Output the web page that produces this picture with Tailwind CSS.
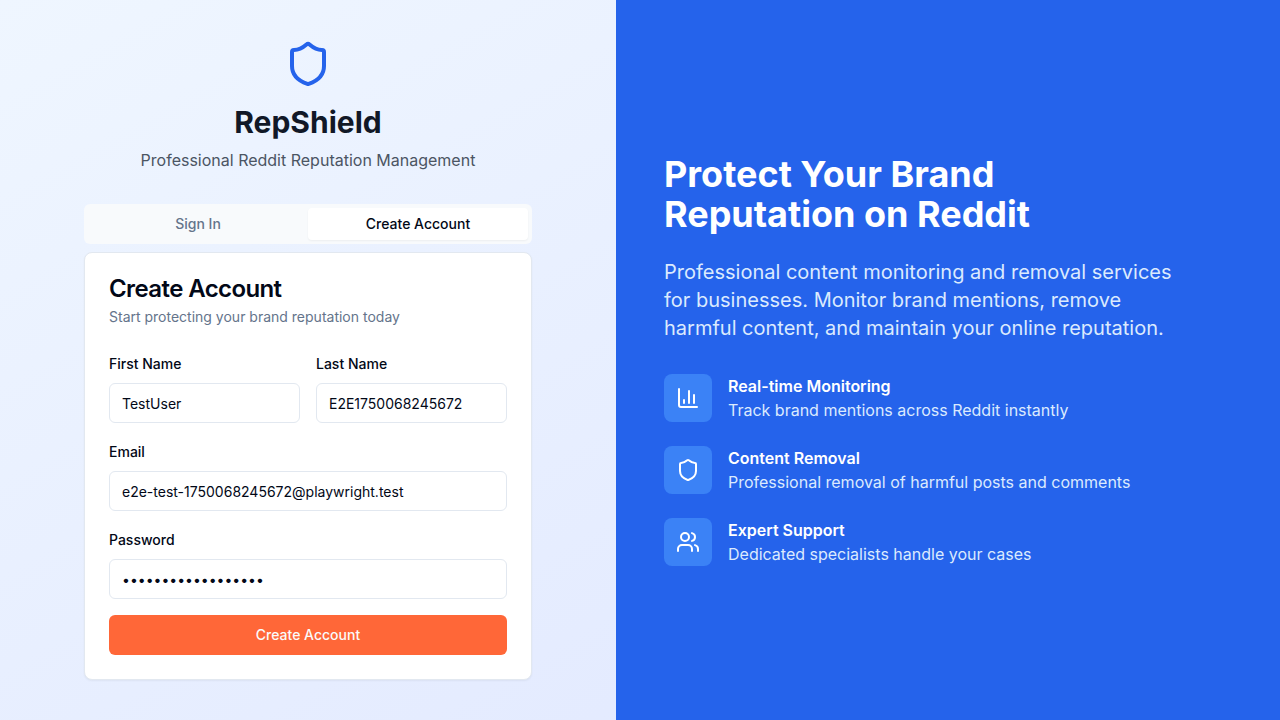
<!DOCTYPE html>
<html lang="en">
<head>
<meta charset="utf-8">
<title>RepShield</title>
<script src="https://cdn.jsdelivr.net/npm/@tailwindcss/browser@4"></script>
</head>
<body class="font-['Inter',sans-serif] text-[#020817] bg-white">
<div class="min-h-screen flex bg-linear-to-br from-[#eff6ff] to-[#e0e7ff]">
  <main class="w-[616px] shrink-0 flex items-center justify-center">
    <div class="w-[448px]">
      <header class="text-center mb-8">
        <svg class="size-12 mx-auto mb-4 text-[#2563eb]" viewBox="0 0 24 24" fill="none" stroke="currentColor" stroke-width="2" stroke-linecap="round" stroke-linejoin="round"><path d="M20 13c0 5-3.5 7.5-7.66 8.95a1 1 0 0 1-.67-.01C7.5 20.5 4 18 4 13V6a1 1 0 0 1 1-1c2 0 4.5-1.2 6.24-2.72a1.17 1.17 0 0 1 1.52 0C14.51 3.81 17 5 19 5a1 1 0 0 1 1 1z"/></svg>
        <h1 class="text-3xl font-bold text-[#111827]">RepShield</h1>
        <p class="mt-2 text-[#4b5563]">Professional Reddit Reputation Management</p>
      </header>
      <div class="grid grid-cols-2 h-10 p-1 rounded-md bg-[#f8fafc] text-sm font-medium">
        <button class="rounded-sm text-[#64748b]">Sign In</button>
        <button class="rounded-sm bg-white shadow-xs">Create Account</button>
      </div>
      <section class="mt-2 p-6 rounded-lg border border-[#e2e8f0] bg-white shadow-xs">
        <h2 class="text-2xl leading-6 font-semibold tracking-tight">Create Account</h2>
        <p class="mt-1.5 text-sm text-[#64748b]">Start protecting your brand reputation today</p>
        <form class="mt-6 space-y-4">
          <div class="grid grid-cols-2 gap-4">
            <div class="space-y-2">
              <div class="h-6"><label class="text-sm leading-none font-medium">First Name</label></div>
              <input class="block w-full h-10 px-3 rounded-md border border-[#e2e8f0] bg-white text-sm" value="TestUser">
            </div>
            <div class="space-y-2">
              <div class="h-6"><label class="text-sm leading-none font-medium">Last Name</label></div>
              <input class="block w-full h-10 px-3 rounded-md border border-[#e2e8f0] bg-white text-sm" value="E2E1750068245672">
            </div>
          </div>
          <div class="space-y-2">
            <div class="h-6"><label class="text-sm leading-none font-medium">Email</label></div>
            <input class="block w-full h-10 px-3 rounded-md border border-[#e2e8f0] bg-white text-sm" value="e2e-test-1750068245672@playwright.test">
          </div>
          <div class="space-y-2">
            <div class="h-6"><label class="text-sm leading-none font-medium">Password</label></div>
            <input type="password" class="block w-full h-10 px-3 rounded-md border border-[#e2e8f0] bg-white text-sm" value="TestPassword123456">
          </div>
          <button type="button" class="block w-full h-10 rounded-md bg-[#ff6738] text-[#fafafa] text-sm font-medium">Create Account</button>
        </form>
      </section>
    </div>
  </main>
  <aside class="flex-1 bg-[#2563eb] px-12 flex items-center text-white">
    <div class="w-[512px]">
      <h2 class="text-4xl leading-10 font-bold mb-6">Protect Your Brand Reputation on Reddit</h2>
      <p class="text-xl leading-7 text-[#dbeafe] mb-8">Professional content monitoring and removal services for businesses. Monitor brand mentions, remove harmful content, and maintain your online reputation.</p>
      <div class="space-y-6">
        <div class="flex items-center gap-4">
          <div class="size-12 rounded-lg bg-[#3b82f6] flex items-center justify-center"><svg class="size-6" viewBox="0 0 24 24" fill="none" stroke="currentColor" stroke-width="2" stroke-linecap="round" stroke-linejoin="round"><path d="M3 3v16a2 2 0 0 0 2 2h16M18 17V9M13 17V5M8 17v-3"/></svg></div>
          <div><h3 class="font-semibold">Real-time Monitoring</h3><p class="text-[#dbeafe]">Track brand mentions across Reddit instantly</p></div>
        </div>
        <div class="flex items-center gap-4">
          <div class="size-12 rounded-lg bg-[#3b82f6] flex items-center justify-center"><svg class="size-6" viewBox="0 0 24 24" fill="none" stroke="currentColor" stroke-width="2" stroke-linecap="round" stroke-linejoin="round"><path d="M20 13c0 5-3.5 7.5-7.66 8.95a1 1 0 0 1-.67-.01C7.5 20.5 4 18 4 13V6a1 1 0 0 1 1-1c2 0 4.5-1.2 6.24-2.72a1.17 1.17 0 0 1 1.52 0C14.51 3.81 17 5 19 5a1 1 0 0 1 1 1z"/></svg></div>
          <div><h3 class="font-semibold">Content Removal</h3><p class="text-[#dbeafe]">Professional removal of harmful posts and comments</p></div>
        </div>
        <div class="flex items-center gap-4">
          <div class="size-12 rounded-lg bg-[#3b82f6] flex items-center justify-center"><svg class="size-6" viewBox="0 0 24 24" fill="none" stroke="currentColor" stroke-width="2" stroke-linecap="round" stroke-linejoin="round"><path d="M16 21v-2a4 4 0 0 0-4-4H6a4 4 0 0 0-4 4v2"/><circle cx="9" cy="7" r="4"/><path d="M22 21v-2a4 4 0 0 0-3-3.87M16 3.13a4 4 0 0 1 0 7.75"/></svg></div>
          <div><h3 class="font-semibold">Expert Support</h3><p class="text-[#dbeafe]">Dedicated specialists handle your cases</p></div>
        </div>
      </div>
    </div>
  </aside>
</div>
</body>
</html>
